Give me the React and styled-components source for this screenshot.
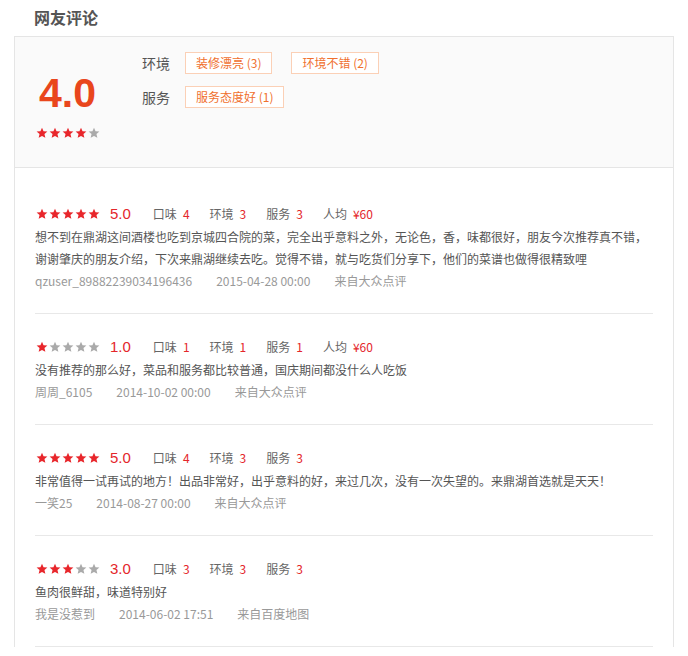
import React from "react";
import styled, { createGlobalStyle } from "styled-components";

const GlobalStyle = createGlobalStyle`
  body {
    margin: 0;
    background: #fff;
    font-family: "Liberation Sans", "Noto Sans CJK SC", sans-serif;
  }
`;

const summaryTags = [
  { label: "环境", tags: ["装修漂亮 (3)", "环境不错 (2)"] },
  { label: "服务", tags: ["服务态度好 (1)"] },
];

const reviews = [
  {
    stars: 5,
    score: "5.0",
    scores: [["口味", "4"], ["环境", "3"], ["服务", "3"], ["人均", "¥60"]],
    text: "想不到在鼎湖这间酒楼也吃到京城四合院的菜，完全出乎意料之外，无论色，香，味都很好，朋友今次推荐真不错，谢谢肇庆的朋友介绍，下次来鼎湖继续去吃。觉得不错，就与吃货们分享下，他们的菜谱也做得很精致哩",
    user: "qzuser_89882239034196436",
    date: "2015-04-28 00:00",
    source: "来自大众点评",
  },
  {
    stars: 1,
    score: "1.0",
    scores: [["口味", "1"], ["环境", "1"], ["服务", "1"], ["人均", "¥60"]],
    text: "没有推荐的那么好，菜品和服务都比较普通，国庆期间都没什么人吃饭",
    user: "周周_6105",
    date: "2014-10-02 00:00",
    source: "来自大众点评",
  },
  {
    stars: 5,
    score: "5.0",
    scores: [["口味", "4"], ["环境", "3"], ["服务", "3"]],
    text: "非常值得一试再试的地方！出品非常好，出乎意料的好，来过几次，没有一次失望的。来鼎湖首选就是天天！",
    user: "一笑25",
    date: "2014-08-27 00:00",
    source: "来自大众点评",
  },
  {
    stars: 3,
    score: "3.0",
    scores: [["口味", "3"], ["环境", "3"], ["服务", "3"]],
    text: "鱼肉很鲜甜，味道特别好",
    user: "我是没惹到",
    date: "2014-06-02 17:51",
    source: "来自百度地图",
  },
];

const Stars = ({ count }) => (
  <StarRow>
    {[0, 1, 2, 3, 4].map((i) => (
      <svg key={i} width="12" height="12" viewBox="0 0 24 24">
        <path
          d="M12 1.5l3.1 7.1 7.7.6-5.9 5 1.8 7.5L12 17.8l-6.7 3.9 1.8-7.5-5.9-5 7.7-.6z"
          fill={i < count ? "#e8262b" : "#aaaaaa"}
        />
      </svg>
    ))}
  </StarRow>
);

const App = () => {
  return (
    <Page>
      <GlobalStyle />
      <Title>网友评论</Title>
      <Panel>
        <Summary>
          <ScoreBox>
            <BigScore>4.0</BigScore>
            <Stars count={4} />
          </ScoreBox>
          <TagList>
            {summaryTags.map((row) => (
              <TagRow key={row.label}>
                <TagLabel>{row.label}</TagLabel>
                {row.tags.map((t) => (
                  <Tag key={t}>{t}</Tag>
                ))}
              </TagRow>
            ))}
          </TagList>
        </Summary>
        <ReviewList>
          {reviews.map((r, idx) => (
            <Review key={idx}>
              <ReviewHead>
                <Stars count={r.stars} />
                <Score>{r.score}</Score>
                {r.scores.map(([k, v]) => (
                  <SubScore key={k}>
                    {k}<em>{v}</em>
                  </SubScore>
                ))}
              </ReviewHead>
              <ReviewText>{r.text}</ReviewText>
              <Meta>
                <span>{r.user}</span>
                <span>{r.date}</span>
                <span>{r.source}</span>
              </Meta>
            </Review>
          ))}
        </ReviewList>
      </Panel>
    </Page>
  );
};

const Page = styled.div`
  width: 688px;
`;

const Title = styled.h2`
  margin: 0;
  padding: 6px 0 0 34px;
  height: 30px;
  line-height: 22px;
  font-size: 16px;
  font-weight: bold;
  color: #555;
  font-family: "Noto Sans CJK SC", sans-serif;
`;

const Panel = styled.div`
  margin-left: 14px;
  width: 658px;
  border: 1px solid #e5e5e5;
  border-bottom: none;
`;

const Summary = styled.div`
  display: flex;
  align-items: flex-start;
  height: 130px;
  padding-left: 21px;
  background: #fafafa;
  border-bottom: 1px solid #e5e5e5;
`;

const ScoreBox = styled.div`
  width: 63px;
  padding-top: 34px;
  display: flex;
  flex-direction: column;
  align-items: center;
`;

const BigScore = styled.div`
  font-family: "Liberation Sans", sans-serif;
  font-size: 41px;
  font-weight: bold;
  line-height: 44px;
  color: #e9461c;
  margin-bottom: 12px;
`;

const StarRow = styled.div`
  display: flex;
  gap: 1px;
  svg {
    display: block;
  }
`;

const TagList = styled.div`
  margin-left: 43px;
  padding-top: 15px;
  display: flex;
  flex-direction: column;
  gap: 12px;
`;

const TagRow = styled.div`
  display: flex;
  align-items: center;
  gap: 19px;
`;

const TagLabel = styled.span`
  font-family: "Noto Sans CJK SC", sans-serif;
  font-size: 14px;
  color: #555;
  width: 28px;
  white-space: nowrap;
  margin-right: -4px;
`;

const Tag = styled.span`
  height: 20px;
  line-height: 20px;
  padding: 0 10px;
  border: 1px solid #fbd0b6;
  background: #fff;
  color: #f0702e;
  font-size: 12px;
  white-space: nowrap;
  font-family: "Noto Sans CJK SC", sans-serif;
`;

const ReviewList = styled.div`
  padding: 13px 20px 0;
`;

const Review = styled.div`
  padding: 20px 0 21px;
  border-bottom: 1px solid #e8e8e8;
`;

const ReviewHead = styled.div`
  display: flex;
  align-items: center;
  height: 25px;
  padding-left: 1px;
`;

const Score = styled.span`
  margin-left: 10px;
  font-family: "Liberation Sans", sans-serif;
  font-size: 15px;
  color: #e4262b;
  margin-right: 2px;
`;

const SubScore = styled.span`
  margin-left: 20px;
  font-family: "Noto Sans CJK SC", sans-serif;
  font-size: 12px;
  color: #666;
  em {
    font-style: normal;
    color: #e4262b;
    margin-left: 6px;
  }
`;

const ReviewText = styled.p`
  margin: 0;
  font-family: "Noto Sans CJK SC", sans-serif;
  font-size: 12px;
  line-height: 22px;
  color: #555;
`;

const Meta = styled.div`
  display: flex;
  gap: 24px;
  font-family: "Noto Sans CJK SC", sans-serif;
  font-size: 12px;
  line-height: 22px;
  color: #999;
`;

export default App;
